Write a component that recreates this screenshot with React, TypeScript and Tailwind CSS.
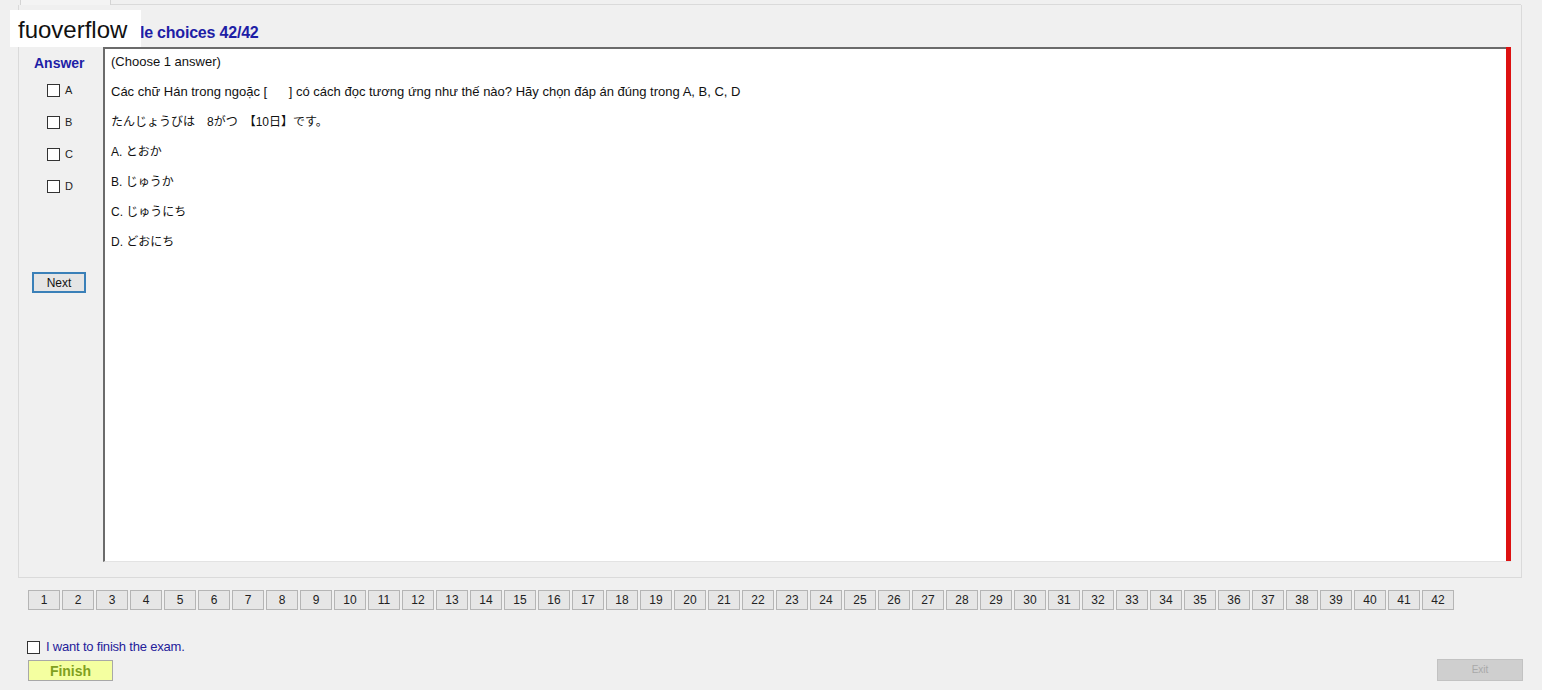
import React from "react";

const nums = Array.from({ length: 42 }, (_, i) => i + 1);

function Box({ className = "" }: { className?: string }) {
  return <span className={"inline-block w-[13px] h-[13px] border border-[#333] bg-white " + className} />;
}

export default function App() {
  const font = { fontFamily: '"Liberation Sans", Arial, "Noto Sans CJK JP", sans-serif' };
  return (
    <div className="relative w-[1542px] h-[690px] bg-[#f0f0f0] overflow-hidden text-black" style={font}>
      {/* tab strip */}
      <div className="flex h-[5px]">
        <div className="w-[20px]" />
        <div className="w-[91px] border-x border-[#d4d4d4] bg-[#f4f4f4]" />
        <div className="w-[1410px] border-b border-[#dadada]" />
      </div>
      {/* main group */}
      <div className="ml-[18px] w-[1504px] h-[573px] border-x border-b border-[#dadada] flex flex-col">
        <div className="h-[42px] pl-[75px] pt-[19px] text-[16px] leading-[18px] font-bold text-[#1e1ea6] tracking-[-0.2px]">
          Multiple choices 42/42
        </div>
        <div className="flex h-[515px]">
          <div className="w-[84px] pl-[10px] flex flex-col">
            <div className="w-[74px] h-full flex flex-col">
              <div className="pt-[8px] pl-[5px] text-[14px] leading-[16px] font-bold text-[#1e1ea6]">Answer</div>
              <div className="flex flex-col gap-[19px] mt-[13px] pl-[18px]">
                {["A", "B", "C", "D"].map((l) => (
                  <div key={l} className="flex items-center h-[13px]">
                    <Box />
                    <span className="ml-[5px] text-[11px] text-[#222]">{l}</span>
                  </div>
                ))}
              </div>
              <button className="mt-[79px] ml-[3px] w-[54px] h-[21px] border-2 border-[#3a80b8] bg-[#e5e5e5] text-[12px] leading-[14px] text-[#111]">
                Next
              </button>
            </div>
          </div>
          <div className="relative w-[1408px] h-full bg-white border-l-2 border-t-2 border-[#6b6b6b] border-b border-b-[#e3e3e3]">
            <div className="absolute right-0 -top-[2px] bottom-0 w-[5px] bg-[#dd1111]" />
            <div className="pl-[6px] pt-[6px] text-[12px] leading-[14px] text-[#111] flex flex-col gap-[16px]">
              <div className="text-[13px]">(Choose 1 answer)</div>
              <div className="whitespace-pre text-[13px]">Các chữ Hán trong ngoặc [      ] có cách đọc tương ứng như thế nào? Hãy chọn đáp án đúng trong A, B, C, D</div>
              <div className="whitespace-pre">たんじょうびは　8がつ　【10日】です。</div>
              <div>A. とおか</div>
              <div>B. じゅうか</div>
              <div>C. じゅうにち</div>
              <div>D. どおにち</div>
            </div>
          </div>
        </div>
      </div>
      {/* number buttons */}
      <div className="flex gap-[2px] ml-[28px] mt-[12px]">
        {nums.map((n) => (
          <button
            key={n}
            className="w-[32px] h-[20px] border border-[#b5b5b5] bg-[#e6e6e6] text-[12px] leading-[14px] text-[#222]"
          >
            {n}
          </button>
        ))}
      </div>
      {/* finish */}
      <div className="flex items-center ml-[27px] mt-[30px] h-[14px]">
        <Box />
        <span className="ml-[6px] text-[13px] leading-[14px] text-[#24209a] tracking-[-0.2px]">I want to finish the exam.</span>
      </div>
      <div className="flex justify-between items-start mt-[6px] pl-[28px] pr-[19px]">
        <button className="w-[85px] h-[21px] border border-[#a8a8a8] bg-[#f4ffa0] text-[14px] leading-[14px] font-bold text-[#80a020]">
          Finish
        </button>
        <button className="-mt-[1px] w-[86px] h-[22px] border border-[#c2c2c2] bg-[#cfcfcf] text-[10px] leading-[12px] text-[#a9a9a9]">
          Exit
        </button>
      </div>
      {/* watermark */}
      <div className="absolute left-[10px] top-[10px] w-[131px] h-[37px] bg-white pl-[8px] pt-[6px] text-[24px] leading-[28px] text-[#111]" style={{ fontFamily: '"Liberation Sans", Arial, sans-serif' }}>
        fuoverflow
      </div>
    </div>
  );
}
